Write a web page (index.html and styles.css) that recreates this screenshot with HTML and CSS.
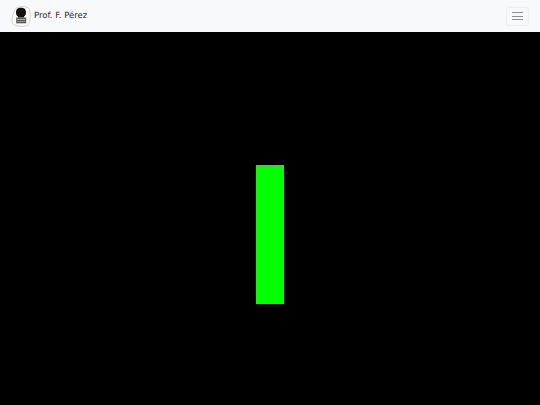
FILE: index.html
```html
<!DOCTYPE html>
<html lang="en">
<head>
    <meta charset="UTF-8">
    <meta name="viewport" content="width=device-width, initial-scale=1.0">
    <title>Prof. F. Pérez</title>
    <link rel="stylesheet" href="styles.css">
</head>
<body>
    <nav class="navbar">
        <a class="brand" href="#">
            <svg class="brand-logo" width="20" height="21" viewBox="0 0 20 21" aria-hidden="true">
                <path d="M6 1.6 C9 .2 14 .2 17 1.6 C18.8 3 19.4 7 19.2 11 C19 15 18.6 18.6 16 19.8 C12.5 20.8 7 20.6 3.4 19 C1 17.8 .6 15 1.2 12 C2 8 3.4 3 6 1.6 Z" fill="#fbfaf7" stroke="#d0cec8" stroke-width=".9"/>
                <path d="M5 6.4 C5 3 7 1.8 10 1.8 C13 1.8 15 3 15 6.4 C15 8.4 14.4 9.6 13 10.4 L13 11.5 L7 11.5 L7 10.4 C5.6 9.6 5 8.4 5 6.4 Z" fill="#111"/>
                <rect x="5.2" y="11.5" width="10" height="5.8" fill="#5a5a5a"/>
                <rect x="6" y="13" width="8.4" height=".9" fill="#b5b5b5"/>
                <rect x="6" y="15.2" width="8.4" height=".8" fill="#a0a0a0"/>
            </svg>
            <span>Prof. F. Pérez</span>
        </a>
        <button class="toggler" type="button" aria-label="Toggle navigation">
            <span class="toggler-line"></span>
            <span class="toggler-line"></span>
            <span class="toggler-line"></span>
        </button>
    </nav>

    <main class="stage">
        <div class="bar"></div>
    </main>
</body>
</html>
```

FILE: styles.css
```css
html, body {
    height: 100%;
}

body {
    margin: 0;
    display: flex;
    flex-direction: column;
    overflow: hidden;
    background-color: #000;
    font-family: "DejaVu Sans", sans-serif;
}

.navbar {
    height: 32px;
    flex: none;
    box-sizing: border-box;
    padding: 0 11px;
    display: flex;
    align-items: center;
    justify-content: space-between;
    background-color: #f8f9fa;
}

.brand {
    display: flex;
    align-items: center;
    gap: 3px;
    color: #2b2f33;
    font-size: 8.5px;
    text-rendering: geometricPrecision;
    text-decoration: none;
}

.brand-logo {
    display: block;
}

.toggler {
    width: 23px;
    height: 19px;
    padding: 0;
    display: flex;
    flex-direction: column;
    align-items: center;
    justify-content: center;
    gap: 2.5px;
    background: transparent;
    border: 1px solid #eeeff0;
    border-radius: 3px;
}

.toggler-line {
    width: 11px;
    height: 1px;
    background-color: #8e8f91;
}

.stage {
    flex: 1;
    display: flex;
    justify-content: center;
    padding-top: 133px;
}

.bar {
    width: 28px;
    height: 139px;
    background-color: #00ff00;
}
```
